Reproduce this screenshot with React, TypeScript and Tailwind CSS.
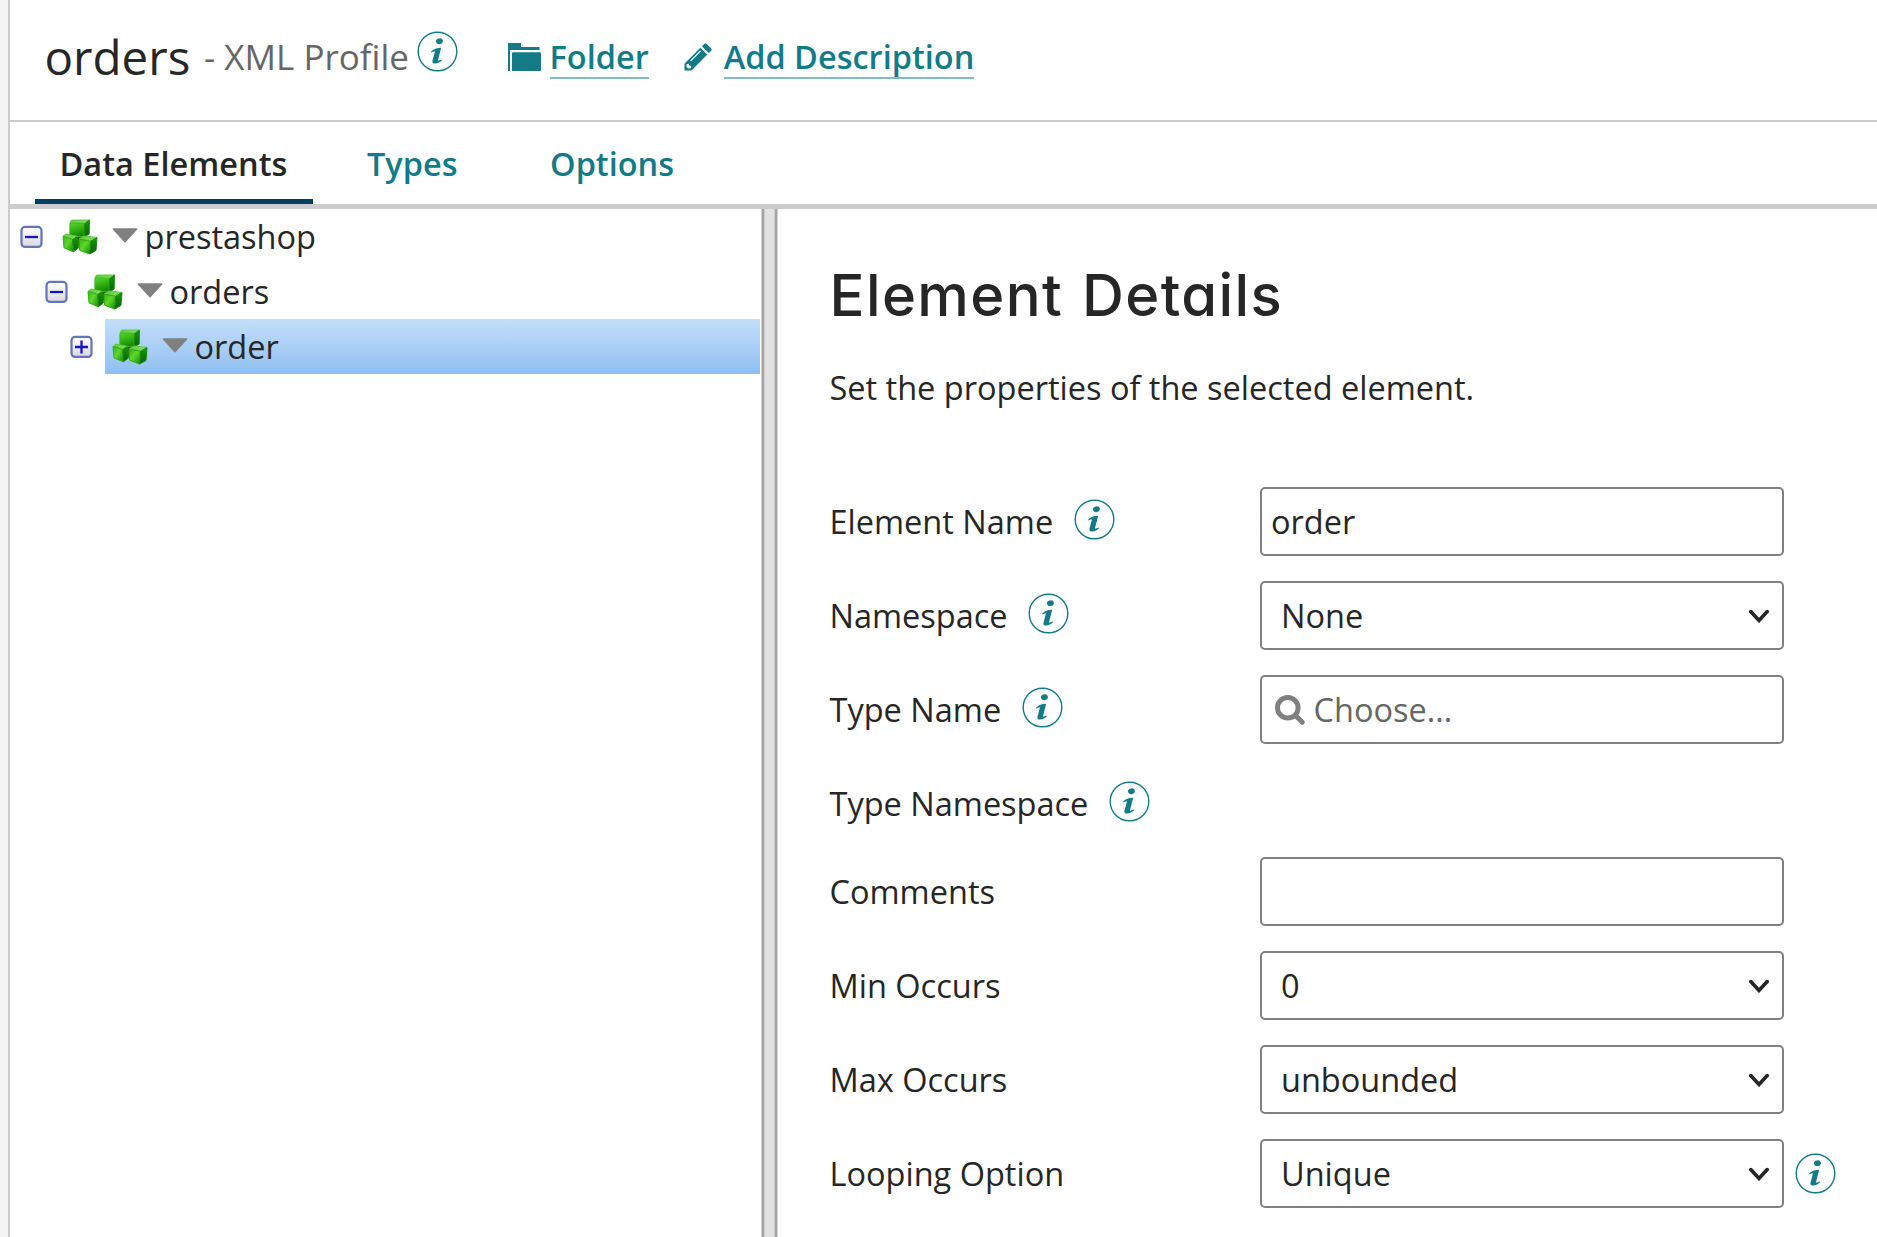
import React from "react";

function InfoIcon({ className = "" }: { className?: string }) {
  return (
    <svg className={`h-[41px] w-[41px] shrink-0 ${className}`} viewBox="-20.5 -20.5 41 41" fill="none">
      <circle r="19.3" stroke="#127b87" strokeWidth="1.4" />
      <ellipse cx="1.9" cy="-10.3" rx="3.5" ry="2.9" transform="rotate(-15 1.9 -10.3)" fill="#127b87" />
      <path
        d="M-6.6 .4C-4.6-1.8-2.2-3.3.6-3.5L3.7-3.8 .6 8.2C.4 9.2.7 9.3 1.3 9.1L4.4 8 4.7 8.6C2.8 10.6 .2 12.1-2.4 12.1-4.6 12.1-5.5 10.9-5 8.9L-2.7 .7C-2.5-.1-2.9-.3-3.8 0L-6.2 1Z"
        fill="#127b87"
      />
    </svg>
  );
}

function FolderIcon() {
  return (
    <svg className="h-7 w-[33px] shrink-0" viewBox="0 0 33 28" fill="#127b87">
      <path d="M0 0H13V4H31.5V7H2V28H0Z" />
      <path d="M5 9.2H32Q33 9.2 33 10.2V27Q33 28 32 28H4V10.2Q4 9.2 5 9.2Z" />
    </svg>
  );
}

function PencilIcon() {
  return (
    <svg className="h-7 w-7 shrink-0" viewBox="0 0 28 28">
      <path d="M20.6.7Q21.6-.1 22.6.8L27.2 5.4Q28.1 6.4 27.3 7.4L24.8 10.1 17.9 3.3Z" fill="#127b87" />
      <path d="M16.4 4.8 23.3 11.6 8.3 26.8 7 27.6H.5V20.9L1.4 19.7Z" fill="#127b87" />
      <path d="M6.6 17.8 16.6 7.9" stroke="#fff" strokeWidth="1.1" />
      <path d="M2.6 21.3 4.9 20.8 5.3 22.6 7.4 23.2 6.8 25.3 4.3 25.6 2.4 23.9Z" fill="#fff" />
    </svg>
  );
}

function Cubes() {
  return (
    <svg className="h-9 w-9 shrink-0 blur-[0.4px]" viewBox="0 0 36 36">
      <defs>
        <linearGradient id="cubeFront" x1="0" y1="0" x2=".3" y2="1">
          <stop offset="0" stopColor="#5bd42a" />
          <stop offset=".5" stopColor="#35b414" />
          <stop offset="1" stopColor="#138a05" />
        </linearGradient>
        <linearGradient id="cubeLow" x1="0" y1="0" x2="1" y2="1">
          <stop offset="0" stopColor="#35b015" />
          <stop offset=".45" stopColor="#5ed82c" />
          <stop offset="1" stopColor="#128504" />
        </linearGradient>
        <linearGradient id="cubeSide" x1="0" y1="0" x2="0" y2="1">
          <stop offset="0" stopColor="#1a960a" />
          <stop offset="1" stopColor="#056102" />
        </linearGradient>
        <linearGradient id="cubeTop" x1="0" y1="0" x2="1" y2="0">
          <stop offset="0" stopColor="#5cc840" />
          <stop offset="1" stopColor="#86e45c" />
        </linearGradient>
      </defs>
      <g strokeLinejoin="round" strokeWidth="1">
        <path d="M11 15 25 15 23 27 14 27Z" fill="#3a4a26" />
        <path d="M9.5 1.1 27.4 1 22.8 4.4 8 4Z" fill="url(#cubeTop)" stroke="#5cc840" />
        <path d="M8 4.2 22.4 4.4 22 18 7.8 16.8Z" fill="url(#cubeFront)" stroke="#3cb81c" />
        <path d="M22.8 4.4 27.4 1.2 27.2 15 22.2 18.2Z" fill="url(#cubeSide)" stroke="#178a0a" />
        <path d="M1.4 17 4 15 15.4 17.4 10.6 20.2Z" fill="url(#cubeTop)" stroke="#5cc840" />
        <path d="M1 17.4 10.4 20.4 11.2 32.8 2 28.8Z" fill="url(#cubeLow)" stroke="#2fae12" />
        <path d="M10.8 20.4 15.4 17.8 16.4 29 11.4 32.8Z" fill="url(#cubeSide)" stroke="#178a0a" />
        <path d="M17.2 19.8 22.6 17 35 18.4 29 22Z" fill="url(#cubeTop)" stroke="#5cc840" />
        <path d="M17 20.2 28.4 22.2 27.4 35 17.6 31.2Z" fill="url(#cubeLow)" stroke="#2fae12" />
        <path d="M28.8 22.2 35 18.6 34 31.4 27.6 35Z" fill="url(#cubeSide)" stroke="#178a0a" />
      </g>
    </svg>
  );
}

function Expander({ open }: { open: boolean }) {
  return (
    <svg className="h-[23px] w-[23px] shrink-0" viewBox="0 0 23 23">
      <defs>
        <linearGradient id="expander" x1="0" y1="0" x2="0" y2="1">
          <stop offset="0" stopColor="#ffffff" />
          <stop offset="1" stopColor="#d9d9dd" />
        </linearGradient>
      </defs>
      <rect x="1.5" y="1.9" width="20" height="20" rx="3.5" fill="url(#expander)" stroke="#6474bd" strokeWidth="2.2" />
      <path d={open ? "M5 12H18" : "M5 12H18M11.5 5.5V18.5"} stroke="#1713cf" strokeWidth="2.3" />
    </svg>
  );
}

function Caret() {
  return (
    <svg className="h-[15px] w-[26px] shrink-0" viewBox="0 0 26 15">
      <path d="M1.3 1H24.7L13 13.8Z" fill="#808080" stroke="#808080" strokeWidth="1.4" strokeLinejoin="round" />
    </svg>
  );
}

function TreeRow({ label, indent, open = true, selected = false }: { label: string; indent: string; open?: boolean; selected?: boolean }) {
  return (
    <div className={`flex h-[55px] items-center ${indent}`}>
      <Expander open={open} />
      <div
        className={`ml-3 flex h-full flex-1 items-center pl-[7px] ${selected ? "bg-linear-to-b from-[#c4dffa] to-[#8fbff0]" : ""}`}
      >
        <Cubes />
        <div className="mr-[7px] ml-[13.5px] -mt-[3px]">
          <Caret />
        </div>
        <span>{label}</span>
      </div>
    </div>
  );
}

function Chevron() {
  return (
    <svg className="h-[14px] w-[22px] shrink-0" viewBox="0 0 22 14">
      <path d="M2.8 2.6 11 11.4 19.2 2.6" fill="none" stroke="#262626" strokeWidth="3.7" strokeLinecap="round" />
    </svg>
  );
}

const box = "flex h-[69px] w-[524px] items-center rounded-[5px] border-2 border-[#808080] bg-white";

function Select({ value }: { value: string }) {
  return (
    <div className={`${box} justify-between pr-[12.5px] pl-[19px]`}>
      <span>{value}</span>
      <Chevron />
    </div>
  );
}

function Row({ label, info = false, children }: { label: string; info?: boolean; children?: React.ReactNode }) {
  return (
    <div className="flex">
      <div className="flex h-[69px] w-[430.5px] shrink-0 items-center">
        <span>{label}</span>
        {info && <InfoIcon className="-mt-[4px] ml-[20.5px]" />}
      </div>
      {children}
    </div>
  );
}

export default function App() {
  return (
    <div className="flex h-[1237px] w-[1877px] overflow-hidden bg-white font-['Open_Sans',sans-serif] text-[32.5px] leading-[44px] whitespace-nowrap text-[#262626]">
      <div className="w-[10px] shrink-0 border-r-2 border-[#cccccc] bg-[#f4f4f4]" />
      <div className="flex min-w-0 flex-1 flex-col">
        <header className="flex h-[122px] shrink-0 items-start border-b-2 border-[#cccccc] pl-[34.5px]">
          <h1 className="mt-[25px] w-[159.5px] text-[47.5px] leading-[64px]">orders</h1>
          <span className="mt-[33px] w-[213px] text-[35px] leading-[48px] text-[#666666]">- XML Profile</span>
          <InfoIcon className="mt-[31px]" />
          <a className="mt-[35px] ml-[50px] flex items-start font-semibold text-[#127b87]">
            <span className="mt-[8px] mr-[8.5px]">
              <FolderIcon />
            </span>
            <span className="h-[44px] border-b-2 border-[#83bcc2]">Folder</span>
          </a>
          <a className="mt-[35px] ml-[35.5px] flex items-start font-semibold text-[#127b87]">
            <span className="mt-[8px] mr-[11.5px]">
              <PencilIcon />
            </span>
            <span className="h-[44px] border-b-2 border-[#83bcc2]">Add Description</span>
          </a>
        </header>
        <nav className="flex h-[87px] shrink-0 border-b-5 border-[#cccccc] pl-[25px] font-semibold text-[#127b87]">
          <div className="w-[278px] border-b-5 border-[#00405c] pt-[20px] pl-[24.5px] text-[#262626]">Data Elements</div>
          <div className="pt-[20px] pl-[54px]">Types</div>
          <div className="pt-[20px] pl-[92.5px]">Options</div>
        </nav>
        <main className="flex min-h-0 flex-1">
          <section className="w-[751px] shrink-0 pr-px">
            <TreeRow label="prestashop" indent="pl-[10px]" />
            <TreeRow label="orders" indent="pl-[35px]" />
            <TreeRow label="order" indent="pl-[60px]" open={false} selected />
          </section>
          <div className="flex w-[17px] shrink-0 justify-between border-x border-[#d0d0d0] bg-[#e2e2e2]">
            <div className="w-[3px] border-r border-[#cccccc] bg-[#a6a6a6]" />
            <div className="w-[3px] border-l border-[#cccccc] bg-[#a6a6a6]" />
          </div>
          <section className="pl-[51.5px]">
            <h2 className="mt-[51px] font-['Inter'] text-[58px] leading-[70px] font-medium tracking-[1.4px] [word-spacing:2px] [font-feature-settings:'cv11']">
              Element Details
            </h2>
            <p className="mt-[36px]">Set the properties of the selected element.</p>
            <div className="mt-[77px] flex flex-col gap-[25px]">
              <Row label="Element Name" info>
                <div className={`${box} pl-[9px]`}>order</div>
              </Row>
              <Row label="Namespace" info>
                <Select value="None" />
              </Row>
              <Row label="Type Name" info>
                <div className={`${box} pl-[11.5px] text-[#666666]`}>
                  <svg className="mr-[8px] h-[32px] w-[32px]" viewBox="0 0 32 32" fill="none" stroke="#808080">
                    <circle cx="13.8" cy="13.8" r="10.3" strokeWidth="5" />
                    <path d="M21.5 21.5 28.3 28.3" strokeWidth="5" strokeLinecap="round" />
                  </svg>
                  Choose...
                </div>
              </Row>
              <div className="-mb-[6px]">
                <Row label="Type Namespace" info />
              </div>
              <Row label="Comments">
                <div className={box} />
              </Row>
              <Row label="Min Occurs">
                <Select value="0" />
              </Row>
              <Row label="Max Occurs">
                <Select value="unbounded" />
              </Row>
              <Row label="Looping Option">
                <Select value="Unique" />
                <InfoIcon className="mt-[14px] ml-[11px]" />
              </Row>
            </div>
          </section>
        </main>
      </div>
    </div>
  );
}
